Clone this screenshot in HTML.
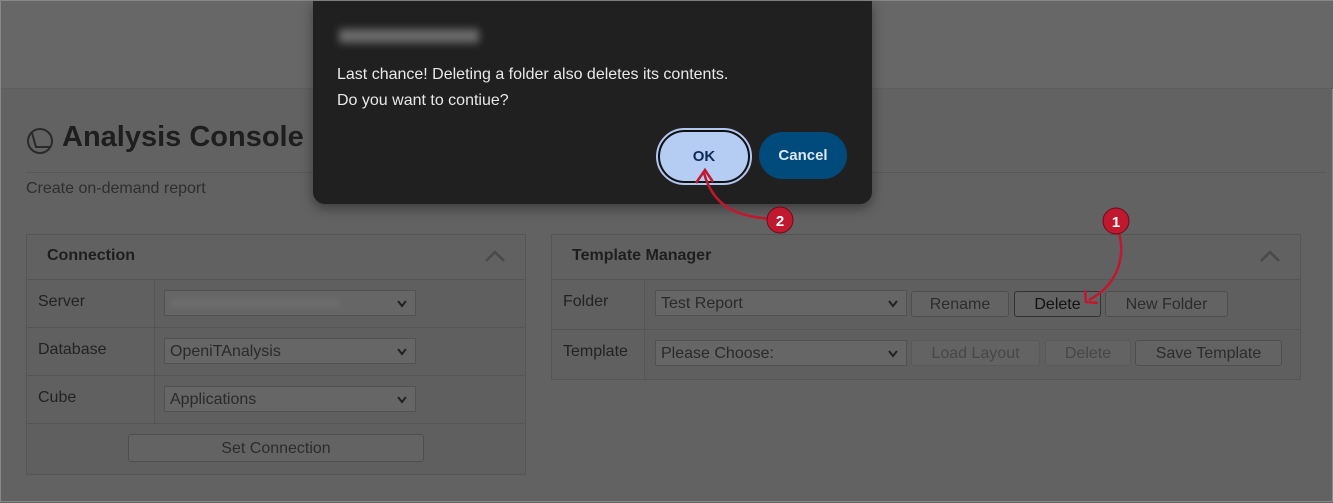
<!DOCTYPE html>
<html><head><meta charset="utf-8"><style>
*{box-sizing:border-box;margin:0;padding:0}
body{width:1333px;height:502px;background:#626262;font-family:"Liberation Sans",sans-serif;position:relative;overflow:hidden;border:1px solid #888}
.a{position:absolute}
.top{left:0;top:0;width:1333px;height:88px;background:#676767;border-bottom:1px solid #5e5e5e}
.t{color:#1e1e1e}
.panel{border:1px solid #555;background:#5f5f5f}
.ph{background:#616161;border-bottom:1px solid #555;font-weight:bold;font-size:16px;color:#1e1e1e}
.sel{border:1px solid #525252;background:#666;font-size:16px;color:#2a2a2a;padding-left:5px;line-height:26px;height:26px}
.sel svg{position:absolute;right:8px;top:9px}
.btn{border:1px solid #4e4e4e;border-radius:3px;font-size:16px;color:#2c2c2c;text-align:center;line-height:25px;height:26px;background:#636363}
.lab{font-size:16px;color:#222}
</style></head><body>
<div class="a top"></div>
<svg class="a" style="left:25px;top:124px" width="30" height="32" viewBox="0 0 30 32"><circle cx="14" cy="16" r="12" fill="none" stroke="#2a2a2a" stroke-width="2"/><path d="M6 8 L10 22 L24 22" fill="none" stroke="#2a2a2a" stroke-width="2"/></svg>
<div class="a t" style="left:61px;top:120px;font-size:29px;font-weight:bold">Analysis Console</div>
<div class="a" style="left:25px;top:171px;width:1300px;border-top:1px solid #575757"></div>
<div class="a" style="left:25px;top:179px;font-size:16px;color:#2e2e2e">Create on-demand report</div>

<div class="a panel" style="left:25px;top:233px;width:500px;height:241px"></div>
<div class="a ph" style="left:26px;top:234px;width:498px;height:45px;padding:12px 20px">Connection</div>
<svg class="a" style="left:483px;top:248px" width="22" height="14"><path d="M2 12 L11 3 L20 12" fill="none" stroke="#4a4a4a" stroke-width="2.5"/></svg>
<div class="a" style="left:26px;top:279px;width:128px;height:144px;background:#606060;border-right:1px solid #555"></div>
<div class="a" style="left:26px;top:326px;width:498px;border-top:1px solid #555"></div>
<div class="a" style="left:26px;top:374px;width:498px;border-top:1px solid #555"></div>
<div class="a" style="left:26px;top:422px;width:498px;border-top:1px solid #555"></div>
<div class="a lab" style="left:37px;top:292px">Server</div>
<div class="a lab" style="left:37px;top:340px">Database</div>
<div class="a lab" style="left:37px;top:388px">Cube</div>
<div class="a sel" style="left:163px;top:289px;width:252px"><span style="display:inline-block;width:170px;height:10px;background:#6c6c6c;filter:blur(2px);margin-top:7px;vertical-align:top"></span><svg width="10" height="8"><path d="M1 1 L5 6 L9 1" fill="none" stroke="#222" stroke-width="2"/></svg></div>
<div class="a sel" style="left:163px;top:337px;width:252px">OpeniTAnalysis<svg width="10" height="8"><path d="M1 1 L5 6 L9 1" fill="none" stroke="#222" stroke-width="2"/></svg></div>
<div class="a sel" style="left:163px;top:385px;width:252px">Applications<svg width="10" height="8"><path d="M1 1 L5 6 L9 1" fill="none" stroke="#222" stroke-width="2"/></svg></div>
<div class="a btn" style="left:127px;top:433px;width:296px;height:28px;line-height:27px">Set Connection</div>

<div class="a panel" style="left:550px;top:233px;width:750px;height:146px"></div>
<div class="a ph" style="left:551px;top:234px;width:748px;height:45px;padding:12px 20px">Template Manager</div>
<svg class="a" style="left:1258px;top:248px" width="22" height="14"><path d="M2 12 L11 3 L20 12" fill="none" stroke="#4a4a4a" stroke-width="2.5"/></svg>
<div class="a" style="left:551px;top:279px;width:93px;height:99px;background:#606060;border-right:1px solid #555"></div>
<div class="a" style="left:551px;top:328px;width:748px;border-top:1px solid #555"></div>
<div class="a lab" style="left:562px;top:292px">Folder</div>
<div class="a lab" style="left:562px;top:342px">Template</div>
<div class="a sel" style="left:654px;top:289px;width:252px">Test Report<svg width="10" height="8"><path d="M1 1 L5 6 L9 1" fill="none" stroke="#222" stroke-width="2"/></svg></div>
<div class="a btn" style="left:910px;top:290px;width:98px">Rename</div>
<div class="a btn" style="left:1013px;top:290px;width:87px;border-color:#333;color:#111">Delete</div>
<div class="a btn" style="left:1104px;top:290px;width:123px">New Folder</div>
<div class="a sel" style="left:654px;top:339px;width:252px">Please Choose:<svg width="10" height="8"><path d="M1 1 L5 6 L9 1" fill="none" stroke="#222" stroke-width="2"/></svg></div>
<div class="a btn" style="left:910px;top:339px;width:129px;color:#474747;border-color:#595959">Load Layout</div>
<div class="a btn" style="left:1044px;top:339px;width:86px;color:#474747;border-color:#595959">Delete</div>
<div class="a btn" style="left:1134px;top:339px;width:147px">Save Template</div>

<div class="a" style="left:312px;top:0;width:559px;height:203px;background:#202020;border-radius:0 0 12px 12px;box-shadow:0 4px 12px rgba(0,0,0,.4)"></div>
<div class="a" style="left:338px;top:28px;width:140px;height:14px;background:#8a8a8a;filter:blur(4px);opacity:.7"></div>
<div class="a" style="left:336px;top:61px;font-size:16px;color:#e8e8e8;line-height:26px">Last chance! Deleting a folder also deletes its contents.<br>Do you want to contiue?</div>
<div class="a" style="left:655px;top:127px;width:96px;height:57px;border-radius:29px;border:2px solid #b0c8f0;background:#111"></div>
<div class="a" style="left:659px;top:131px;width:88px;height:49px;border-radius:25px;background:#b6cdf3;color:#0c2a5a;font-size:15px;font-weight:bold;text-align:center;line-height:49px">OK</div>
<div class="a" style="left:758px;top:131px;width:88px;height:47px;border-radius:24px;background:#004a7c;color:#dde8f4;font-size:15px;font-weight:bold;text-align:center;line-height:47px">Cancel</div>

<svg class="a" style="left:0;top:0" width="1333" height="502">
<path d="M772 218 C735 216 712 205 703 172" fill="none" stroke="#c0182f" stroke-width="2.5"/>
<path d="M695 182 L704 169 L712 181" fill="none" stroke="#c0182f" stroke-width="2.5"/>
<path d="M1118 232 C1125 258 1115 285 1088 299" fill="none" stroke="#c0182f" stroke-width="2.5"/>
<path d="M1084 289 L1085 301 L1097 302" fill="none" stroke="#c0182f" stroke-width="2.5"/>
<circle cx="779" cy="219" r="13" fill="#c0182f" stroke="#6a0d18" stroke-width="1"/>
<circle cx="1115" cy="220" r="13" fill="#c0182f" stroke="#6a0d18" stroke-width="1"/>
<text x="779" y="225" fill="#fff" font-size="15" font-weight="bold" text-anchor="middle" font-family="Liberation Sans">2</text>
<text x="1115" y="226" fill="#fff" font-size="15" font-weight="bold" text-anchor="middle" font-family="Liberation Sans">1</text>
</svg>
</body></html>
